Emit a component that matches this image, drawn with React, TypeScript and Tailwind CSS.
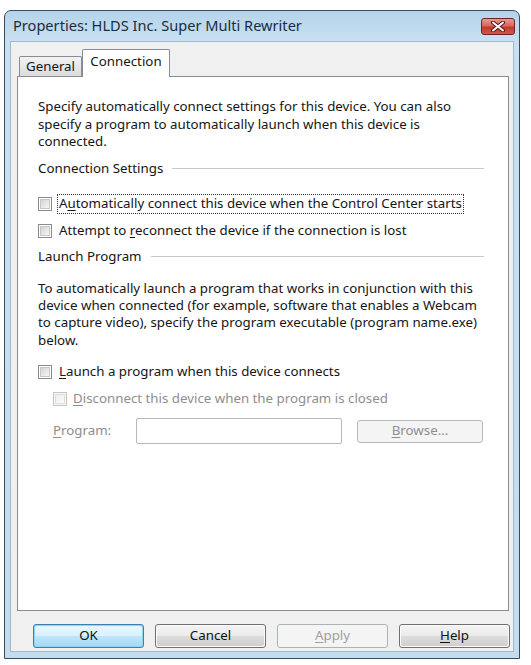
import React from "react";

const U = ({ children }: { children: React.ReactNode }) => (
  <span className="underline underline-offset-[2px] decoration-[1px]">{children}</span>
);

function Check({ disabled }: { disabled?: boolean }) {
  return (
    <div
      className={
        "w-[14px] h-[14px] shrink-0 border p-[1px] " +
        (disabled ? "border-[#c4c4c4] bg-[#f7f7f7]" : "border-[#8a8a8a] bg-white")
      }
    >
      <div
        className={
          "w-full h-full border " +
          (disabled
            ? "border-[#dedede] bg-gradient-to-br from-[#eeeeee] to-[#fbfbfb]"
            : "border-[#c7c7c7] bg-gradient-to-br from-[#d4d4d4] to-[#f7f7f7]")
        }
      />
    </div>
  );
}

function Btn({
  children,
  variant,
}: {
  children: React.ReactNode;
  variant?: "default" | "disabled" | "normal";
}) {
  if (variant === "default")
    return (
      <div className="w-[111px] h-[24px] rounded-[3px] border border-[#3c7fb1] p-[1px] bg-[#8fd6f2]">
        <div className="w-full h-full rounded-[2px] flex items-center justify-center bg-[linear-gradient(#e9f6fd_0%,#d9f0fc_50%,#bee6fd_51%,#a7d9f5_100%)] text-[#111]">
          {children}
        </div>
      </div>
    );
  if (variant === "disabled")
    return (
      <div className="w-[111px] h-[24px] rounded-[3px] border border-[#adb2b5] bg-[#f4f4f4] flex items-center justify-center text-[#a0a0a0]">
        {children}
      </div>
    );
  return (
    <div className="w-[111px] h-[24px] rounded-[3px] border border-[#707070] p-[1px] bg-[#fbfbfb]">
      <div className="w-full h-full rounded-[2px] flex items-center justify-center bg-[linear-gradient(#f2f2f2_0%,#ebebeb_50%,#dddddd_51%,#cfcfcf_100%)] text-[#111]">
        {children}
      </div>
    </div>
  );
}

function Header({ children }: { children: React.ReactNode }) {
  return (
    <div className="h-[18px] flex items-center">
      <span className="whitespace-nowrap">{children}</span>
      <div className="flex-1 ml-[9px] h-[1px] bg-[#c9c9c9]" />
    </div>
  );
}

export default function App() {
  return (
    <div
      className="w-[531px] h-[665px] bg-white pl-[4px] pt-[10px] text-[13.3px] text-[#151515] overflow-hidden"
      style={{ fontFamily: "'Noto Sans', 'Open Sans', sans-serif" }}
    >
      <div className="w-[516px] h-[649px] rounded-t-[7px] border border-[#344d60] bg-[linear-gradient(180deg,#b4d3ea_0px,#c9e0f1_30px,#c3dcee_100%)] flex flex-col">
        {/* title bar */}
        <div className="h-[30px] flex items-center justify-between pl-[8px] pr-[4px]">
          <span className="text-[14.6px] text-[#1a2d40] whitespace-nowrap">
            Properties: HLDS Inc. Super Multi Rewriter
          </span>
          <div className="w-[34px] h-[17px] rounded-[3px] border border-[#6b2620] bg-[linear-gradient(#e79a90_0%,#d9675c_45%,#c13a2e_55%,#d2574a_100%)] flex items-center justify-center">
            <svg width="14" height="11" viewBox="0 0 14 11">
              <path
                d="M2 1.5 L12 9.5 M12 1.5 L2 9.5"
                stroke="#5a1d17"
                strokeWidth="4"
                strokeLinecap="round"
              />
              <path
                d="M2 1.5 L12 9.5 M12 1.5 L2 9.5"
                stroke="#ffffff"
                strokeWidth="2"
                strokeLinecap="round"
              />
            </svg>
          </div>
        </div>
        {/* client */}
        <div className="flex-1 mx-[5px] mb-[6px] border border-[#9fb9cf] bg-[#f0f0f0] flex flex-col pl-[6px] pt-[7px]">
          {/* tabs */}
          <div className="flex items-end h-[27px] relative z-10">
            <div className="ml-[2px] w-[63px] h-[20px] border border-[#898c95] border-b-0 rounded-t-[2px] bg-[linear-gradient(#f3f3f3,#dcdcdc)] flex items-center justify-center">
              General
            </div>
            <div className="w-[88px] h-[28px] border border-[#898c95] border-b-0 rounded-t-[2px] bg-white flex items-start justify-center pt-[2px] mb-[-1px]">
              Connection
            </div>
          </div>
          {/* panel */}
          <div className="w-[492px] h-[535px] border border-[#898c95] bg-white pl-[20px] pr-[24px] pt-[21px] flex flex-col">
            <div className="leading-[17.5px] whitespace-nowrap">
              Specify automatically connect settings for this device. You can also
              <br />
              specify a program to automatically launch when this device is
              <br />
              connected.
            </div>
            <div className="mt-[9px]">
              <Header>Connection Settings</Header>
            </div>
            <div className="mt-[16px] h-[20px] flex items-center">
              <Check />
              <div className="ml-[5px] h-[20px] flex items-center border border-dotted border-[#333] px-[1px] whitespace-nowrap">
                A<U>u</U>tomatically connect this device when the Control Center starts
              </div>
            </div>
            <div className="mt-[7px] h-[20px] flex items-center">
              <Check />
              <div className="ml-[7px] whitespace-nowrap">
                Attempt to <U>r</U>econnect the device if the connection is lost
              </div>
            </div>
            <div className="mt-[7px]">
              <Header>Launch Program</Header>
            </div>
            <div className="mt-[14px] leading-[17.4px] whitespace-nowrap">
              To automatically launch a program that works in conjunction with this
              <br />
              device when connected (for example, software that enables a Webcam
              <br />
              to capture video), specify the program executable (program name.exe)
              <br />
              below.
            </div>
            <div className="mt-[13px] h-[20px] flex items-center">
              <Check />
              <div className="ml-[7px] whitespace-nowrap">
                <U>L</U>aunch a program when this device connects
              </div>
            </div>
            <div className="mt-[7px] ml-[15px] h-[20px] flex items-center text-[#8e8e8e]">
              <Check disabled />
              <div className="ml-[6px] whitespace-nowrap">
                <U>D</U>isconnect this device when the program is closed
              </div>
            </div>
            <div className="mt-[9px] ml-[15px] h-[26px] flex items-center text-[#8e8e8e]">
              <div className="w-[83px] whitespace-nowrap">
                <U>P</U>rogram:
              </div>
              <div className="w-[206px] h-[26px] rounded-[2px] border border-[#b7b7b7] bg-white" />
              <div className="ml-[15px] w-[126px] h-[23px] rounded-[3px] border border-[#b5b9bc] bg-[#f4f4f4] flex items-center justify-center">
                <span>
                  <U>B</U>rowse...
                </span>
              </div>
            </div>
          </div>
          {/* buttons */}
          <div className="mt-[13px] pl-[16px] flex gap-[11px]">
            <Btn variant="default">OK</Btn>
            <Btn>Cancel</Btn>
            <Btn variant="disabled">
              <span>
                <U>A</U>pply
              </span>
            </Btn>
            <Btn>
              <span>
                <U>H</U>elp
              </span>
            </Btn>
          </div>
        </div>
      </div>
    </div>
  );
}
